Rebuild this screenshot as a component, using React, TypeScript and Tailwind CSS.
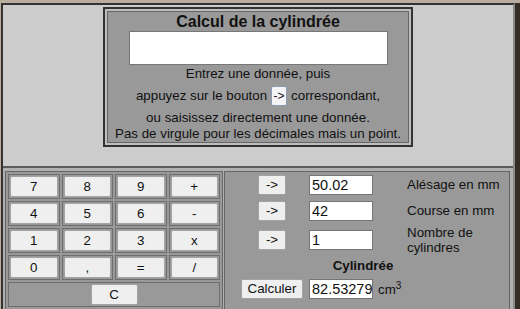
import React from "react"

const font = { fontFamily: '"Liberation Sans", Arial, sans-serif' }

const keys = ["7", "8", "9", "+", "4", "5", "6", "-", "1", "2", "3", "x", "0", ",", "=", "/"]

function Btn({ label, className = "" }: { label: string; className?: string }) {
  return (
    <button
      className={
        "bg-[#efefef] border border-[#a3a3a3] rounded-[2px] text-[13.33px] text-[#111] leading-none flex items-center justify-center " +
        className
      }
    >
      {label}
    </button>
  )
}

function Field({ value }: { value: string }) {
  return (
    <div className="w-[64px] h-[20px] bg-white border border-[#767676] pl-[2px] text-[14.5px] leading-[18px] text-[#111] overflow-hidden whitespace-nowrap">
      {value}
    </div>
  )
}

export default function App() {
  return (
    <div style={font} className="w-[520px] h-[309px] flex bg-[#b9ada0] pt-[3px] pl-[1px] overflow-hidden">
      <div className="w-[514px] h-[306px] flex flex-col bg-[#cccccc] border-l-2 border-t-2 border-[#333] border-r-2 border-r-[#8a8a8a]">
        {/* top info box */}
        <div className="mx-auto mt-[2px] w-[310px] border-2 border-[#333] bg-[#bdbdbd] p-[2px]">
          <div className="border border-[#666] bg-[#999] flex flex-col items-center text-[#111]">
            <div className="h-[19px] font-bold text-[16px] leading-[19px]">Calcul de la cylindrée</div>
            <div className="w-[259px] h-[34px] bg-white border border-[#777]" />
            <div className="h-[18px] text-[13.33px] leading-[18px]">Entrez une donnée, puis</div>
            <div className="h-[26px] flex items-center text-[13.33px]">
              <span>appuyez sur le bouton</span>
              <span className="mx-[4px] w-[16px] h-[20px] bg-[#f4f4f4] border border-[#8c9bb5] rounded-[2px] text-[12px] flex items-center justify-center">
                -&gt;
              </span>
              <span>correspondant,</span>
            </div>
            <div className="h-[18px] text-[13.33px] leading-[18px]">ou saisissez directement une donnée.</div>
            <div className="h-[15px] text-[13.33px] leading-[14px]">Pas de virgule pour les décimales mais un point.</div>
          </div>
        </div>

        {/* bottom calculator */}
        <div className="mt-auto flex gap-[1px] border-t-2 border-[#5a5a5a] bg-[#b0b0b0] pt-[3px] pl-[2px] pr-[3px]">
          <div className="w-[218px] border border-[#666] border-b-0 bg-[#999] p-[2px] grid grid-cols-4 gap-[2px] auto-rows-[25px]">
            {keys.map(k => (
              <div key={k} className="border border-[#6e6e6e] p-[1px] flex">
                <Btn label={k} className="flex-1" />
              </div>
            ))}
            <div className="col-span-4 border border-[#6e6e6e] p-[1px] flex justify-center">
              <Btn label="C" className="w-[47px]" />
            </div>
          </div>

          <div className="flex-1 border border-[#666] border-b-0 bg-[#999] text-[#111]">
            <div className="h-[26px] flex items-center">
              <div className="w-[84px] pl-[10px] flex justify-center"><Btn label="->" className="w-[28px] h-[20px]" /></div>
              <div className="w-[98px]"><Field value="50.02" /></div>
              <div className="text-[13.33px]">Alésage en mm</div>
            </div>
            <div className="h-[26px] flex items-center">
              <div className="w-[84px] pl-[10px] flex justify-center"><Btn label="->" className="w-[28px] h-[20px]" /></div>
              <div className="w-[98px]"><Field value="42" /></div>
              <div className="text-[13.33px]">Course en mm</div>
            </div>
            <div className="h-[32px] flex items-center">
              <div className="w-[84px] pl-[10px] flex justify-center"><Btn label="->" className="w-[28px] h-[20px]" /></div>
              <div className="w-[98px]"><Field value="1" /></div>
              <div className="text-[13.33px] leading-[15px]">Nombre de<br />cylindres</div>
            </div>
            <div className="h-[20px] flex items-center">
              <div className="w-[84px]" />
              <div className="w-[108px] text-center font-bold text-[13.33px]">Cylindrée</div>
            </div>
            <div className="h-[26px] flex items-center">
              <div className="w-[84px] pl-[10px] flex justify-center"><Btn label="Calculer" className="w-[62px] h-[20px]" /></div>
              <div className="flex items-center">
                <Field value="82.53279" />
                <span className="ml-[5px] text-[13.33px] leading-none relative top-[1px]">
                  cm<span className="text-[10px] relative -top-[5px]">3</span>
                </span>
              </div>
            </div>
          </div>
        </div>
      </div>
      <div className="flex-1 bg-[#362c26]" />
    </div>
  )
}
